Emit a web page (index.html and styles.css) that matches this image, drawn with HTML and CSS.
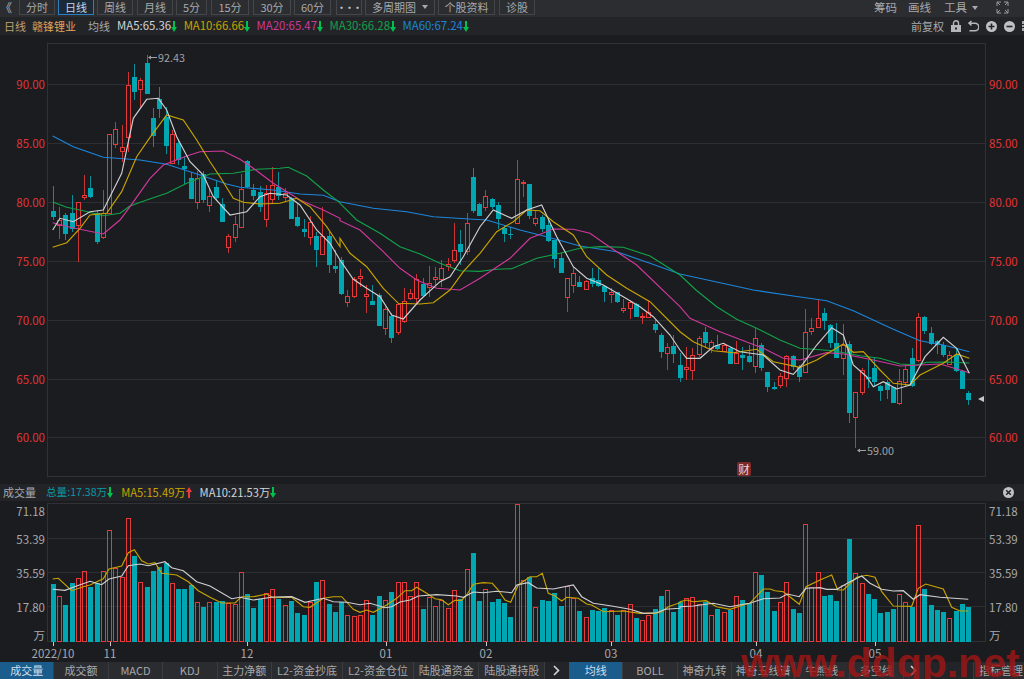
FILE: index.html
```html
<!DOCTYPE html>
<html lang="zh-CN">
<head>
    <meta charset="UTF-8">
    <meta name="viewport" content="width=device-width, initial-scale=1.0">
    <title>赣锋锂业 日线</title>
    <link rel="stylesheet" href="styles.css">
</head>
<body>
    <div class="toolbar">
        <span class="collapse">《</span>
        <span class="btn">分时</span>
        <span class="btn btn-active">日线</span>
        <span class="btn btn-gap">周线</span>
        <span class="btn">月线</span>
        <span class="btn btn-small">5分</span>
        <span class="btn btn-num">15分</span>
        <span class="btn btn-num btn-tight">30分</span>
        <span class="btn btn-num btn-sixty">60分</span>
        <span class="btn btn-dots">•••</span>
        <span class="btn btn-multi">多周期图 <i class="caret"></i></span>
        <span class="btn btn-info">个股资料</span>
        <span class="btn">诊股</span>
        <span class="spacer"></span>
        <span class="tool">筹码</span>
        <span class="tool tool-draw">画线</span>
        <span class="tool tool-last">工具 <i class="caret"></i></span>
        <svg class="expand-icon" width="13" height="13" viewBox="0 0 13 13">
            <path d="M1 5V1h4M1 1l3 3M8 1h4v4M12 1L9 4M1 8v4h4M1 12l3-3M8 12h4V8M12 12L9 9" fill="none" stroke="#9a9b9e"/>
        </svg>
    </div>

    <div class="info-row">
        <span class="period">日线</span>
        <span class="stock">赣锋锂业</span>
        <span class="ma-label">均线</span>
        <span class="ma ma5">MA5:65.36<svg class="arrow" width="6" height="11" viewBox="0 0 6 11"><path d="M2 0h2v6h2l-3 5-3-5h2z" fill="#00c050"/></svg></span>
        <span class="ma ma10">MA10:66.66<svg class="arrow" width="6" height="11" viewBox="0 0 6 11"><path d="M2 0h2v6h2l-3 5-3-5h2z" fill="#00c050"/></svg></span>
        <span class="ma ma20">MA20:65.47<svg class="arrow" width="6" height="11" viewBox="0 0 6 11"><path d="M2 0h2v6h2l-3 5-3-5h2z" fill="#00c050"/></svg></span>
        <span class="ma ma30">MA30:66.28<svg class="arrow" width="6" height="11" viewBox="0 0 6 11"><path d="M2 0h2v6h2l-3 5-3-5h2z" fill="#00c050"/></svg></span>
        <span class="ma ma60">MA60:67.24<svg class="arrow" width="6" height="11" viewBox="0 0 6 11"><path d="M2 0h2v6h2l-3 5-3-5h2z" fill="#00c050"/></svg></span>
        <span class="spacer"></span>
        <span class="adjust">前复权</span>
        <svg class="row-icon" width="10" height="12" viewBox="0 0 10 12">
            <path d="M2.5 5V3.2a2.5 2.5 0 0 1 5 0V5" fill="none" stroke="#b5b6b8" stroke-width="1.4"/>
            <path d="M0 5h10v7H0z" fill="#b5b6b8"/>
            <path d="M4 7.5h2v2H4z" fill="#222428"/>
        </svg>
        <svg class="row-icon" width="11" height="12" viewBox="0 0 11 12">
            <path d="M3.5 1L1 3.2l2.5 2.2M1.5 3.2H7a3.4 3.4 0 0 1 0 7.6H1.5" fill="none" stroke="#b5b6b8" stroke-width="1.5"/>
        </svg>
        <svg class="row-icon" width="11" height="11" viewBox="0 0 11 11">
            <circle cx="5.5" cy="5.5" r="5.5" fill="#c0c1c3"/>
            <path d="M2.5 4.7h6v1.6h-6zM4.7 2.5h1.6v6H4.7z" fill="#222428"/>
        </svg>
        <svg class="row-icon" width="11" height="11" viewBox="0 0 11 11">
            <circle cx="5.5" cy="5.5" r="5.5" fill="#c0c1c3"/>
            <path d="M2.5 4.7h6v1.6h-6z" fill="#222428"/>
        </svg>
        <svg class="edge-icon" width="2" height="10" viewBox="0 0 2 10">
            <path d="M0 0h2v3H0zM0 4h2v2H0zM0 7h2v3H0z" fill="#a8a9ab"/>
        </svg>
    </div>

    <svg id="price-chart" class="chart" width="1024" height="449" viewBox="0 35 1024 449"></svg>

    <div class="vol-header">
        <span class="vol-name">成交量</span>
        <span class="vol-total">总量:17.38万<svg class="arrow" width="6" height="11" viewBox="0 0 6 11"><path d="M2 0h2v6h2l-3 5-3-5h2z" fill="#00c050"/></svg></span>
        <span class="vol-ma5">MA5:15.49万<svg class="arrow" width="6" height="11" viewBox="0 0 6 11"><path d="M3 0l3 5H4v6H2V5H0z" fill="#f03a3a"/></svg></span>
        <span class="vol-ma10">MA10:21.53万<svg class="arrow" width="6" height="11" viewBox="0 0 6 11"><path d="M2 0h2v6h2l-3 5-3-5h2z" fill="#00c050"/></svg></span>
        <span class="spacer"></span>
        <svg class="close-icon" width="11" height="11" viewBox="0 0 11 11">
            <circle cx="5.5" cy="5.5" r="5.5" fill="#c0c1c3"/>
            <path d="M3.2 3.2l4.6 4.6M7.8 3.2L3.2 7.8" stroke="#222428" stroke-width="1.5"/>
        </svg>
    </div>

    <svg id="vol-chart" class="chart" width="1024" height="161" viewBox="0 501 1024 161"></svg>

    <div class="tabs">
        <span class="tab tab-active">成交量</span>
        <span class="tab">成交额</span>
        <span class="tab">MACD</span>
        <span class="tab">KDJ</span>
        <span class="tab">主力净额</span>
        <span class="tab tab-wide">L2-资金抄底</span>
        <span class="tab tab-wide">L2-资金仓位</span>
        <span class="tab tab-mid">陆股通资金</span>
        <span class="tab tab-mid">陆股通持股</span>
        <span class="tab-more">
            <svg width="7" height="11" viewBox="0 0 7 11"><path d="M1 1l4.5 4.5L1 10" fill="none" stroke="#d4d5d8" stroke-width="1.6"/></svg>
        </span>
        <span class="tab tab-active">均线</span>
        <span class="tab">BOLL</span>
        <span class="tab">神奇九转</span>
        <span class="tab tab-five">神奇五线谱</span>
        <span class="tab">牛熊线</span>
        <span class="tab">多空线</span>
        <span class="tab-more tab-more-right">
            <svg width="7" height="11" viewBox="0 0 7 11"><path d="M1 1l4.5 4.5L1 10" fill="none" stroke="#d4d5d8" stroke-width="1.6"/></svg>
        </span>
        <span class="tab tab-manage">指标管理</span>
    </div>

    <div class="watermark">www.ddgp.net</div>

    <script src="chart.js"></script>
</body>
</html>
```

FILE: styles.css
```css
* {
    box-sizing: border-box;
}

html, body {
    margin: 0;
    height: 679px;
    overflow: hidden;
}

body {
    position: relative;
    background-color: #1b1c20;
    color: #a8a9ab;
    font-family: "Noto Sans CJK SC", "Liberation Sans", sans-serif;
    font-size: 11px;
    line-height: 1;
}

.spacer {
    flex: 1;
}

.toolbar {
    display: flex;
    align-items: flex-start;
    height: 17px;
    background-color: #2b2d31;
}

.collapse {
    width: 19px;
    padding-top: 2px;
    font-size: 12px;
    color: #b5b6b8;
}

.btn {
    display: flex;
    align-items: center;
    justify-content: center;
    gap: 6px;
    width: 36px;
    height: 15px;
    margin-right: 3px;
    border: 1px solid #44464a;
    border-top: 0;
    color: #a8a9ab;
}

.btn-active {
    border: 1px solid #2a7fc0;
    border-top: 0;
    background-color: #1c2a38;
    color: #c4d4e4;
}

.btn-gap {
    margin-right: 4px;
}

.btn-small {
    width: 31px;
    margin-right: 4px;
}

.btn-num {
    width: 38px;
    margin-right: 4px;
}

.btn-tight {
    margin-right: 3px;
}

.btn-sixty {
    width: 37px;
    margin-right: 5px;
}

.btn-dots {
    width: 26px;
    font-size: 9px;
    font-weight: bold;
    letter-spacing: -1px;
    color: #c4c5c7;
}

.btn-multi {
    width: 70px;
}

.btn-info {
    width: 57px;
    margin-right: 4px;
}

.caret {
    display: inline-block;
    width: 0;
    height: 0;
    border: 3px solid transparent;
    border-top: 4px solid #a8a9ab;
    border-bottom: 0;
}

.tool {
    display: flex;
    align-items: center;
    gap: 5px;
    height: 15px;
    margin-right: 11px;
    font-size: 11.5px;
    color: #a8a9ab;
}

.tool-draw {
    margin-right: 13px;
}

.tool-last {
    margin-right: 18px;
}

.expand-icon {
    margin: 1px 15px 0 0;
}

.info-row {
    display: flex;
    align-items: center;
    height: 18px;
    padding-left: 4px;
    background-color: #222428;
}

.period {
    width: 28px;
    color: #c4a070;
}

.stock {
    width: 56px;
    color: #e0a55c;
}

.ma-label {
    width: 29px;
    color: #a8a9ab;
}

.ma {
    display: flex;
    align-items: center;
    margin-right: 6.5px;
    font-size: 11.4px;
}

.ma5 { color: #d4d5d8; }
.ma10 { color: #c9a400; }
.ma20 { color: #d0389c; }
.ma30 { color: #12a24a; }
.ma60 { color: #1c86dc; }

.adjust {
    margin-right: 7px;
    color: #a8a9ab;
}

.row-icon {
    margin-right: 7px;
}

.chart {
    display: block;
}

.chart text {
    font-family: "Noto Sans CJK SC", "Liberation Sans", sans-serif;
    font-size: 11.5px;
}

.chart text.mark {
    font-size: 10.8px;
}

.vol-header {
    display: flex;
    align-items: center;
    height: 17px;
    padding-left: 3px;
    background-color: #222428;
}

.vol-name {
    width: 43px;
    color: #a8a9ab;
}

.vol-total,
.vol-ma5,
.vol-ma10 {
    display: flex;
    align-items: center;
    margin-right: 8px;
    font-size: 11.2px;
}

.vol-total {
    font-size: 10.6px;
    color: #0a9aa6;
}

.vol-ma5 { color: #c9a400; }
.vol-ma10 { color: #d4d5d8; }

.close-icon {
    margin-right: 10px;
}

.tabs {
    display: flex;
    height: 17px;
    background-color: #222428;
}

.tab {
    display: flex;
    align-items: center;
    justify-content: center;
    width: 54.4px;
    border-right: 1px solid #3a3c40;
    background-color: #2a2c30;
    color: #a8a9ab;
    white-space: nowrap;
}

.tab-active {
    background-color: #1a5c8c;
    color: #cfdfec;
}

.tab-wide {
    width: 71px;
}

.tab-mid {
    width: 65.5px;
}

.tab-five {
    width: 63px;
}

.tab-more {
    display: flex;
    align-items: center;
    justify-content: center;
    width: 24px;
}

.tab-more-right {
    width: 20px;
    background-color: #2a2c30;
}

.tab-manage {
    margin-left: auto;
    width: 51px;
    padding-left: 4px;
    border-left: 1px solid #3a3c40;
    border-right: 0;
}

/* site stamp lies over the tabs */
.watermark {
    position: absolute;
    left: 741px;
    top: 640px;
    font-family: "Liberation Sans", sans-serif;
    font-size: 41px;
    font-weight: bold;
    line-height: 46px;
    white-space: nowrap;
    color: #a01616;
    opacity: 0.8;
}
```

FILE: chart.js
```js
// candle values: hi, top of body, bottom of body, lo (pixels, read at 3x from each base)
const candleSections = [
    { base: 50, rows: "c407,483,500,510 r470,510,525,568 c490,496,552,570 c434,490,538,545 r455,457,525,635 r375,434,440,450 c378,415,440,445 c480,490,575,582 r420,490,562,568 r252,252,490,490 r217,238,283,295 r225,290,302,335 r65,105,262,305 c43,80,126,150 r85,90,118,170 c15,38,132,132 c175,203,258,290 c110,147,176,205 c170,200,287,312 r240,252,340,343 c270,278,330,345 c320,348,358,405 c365,383,447,447 r362,385,457,478 c362,372,450,458 r415,438,465,485 c390,410,443,450 c445,463,517,517 r553,558,592,610 r497,523,560,575 r372,418,532,532 c330,332,412,415 c403,420,437,450 c408,427,470,485 r405,430,508,530 r350,405,447,462 c367,410,437,450 r415,430,440,455 c440,445,508,508 c462,500,527,530 c508,537,547,560 r497,517,562,585 c545,558,600,650 r470,558,613,613 c545,558,645,670 c600,648,658,668" },
    { base: 150, rows: "c320,330,432,435 r420,437,456,470 r380,388,437,445 r358,379,383,410 r405,433,437,490 c405,452,464,465 c430,435,527,527 r470,476,533,555 c490,497,565,578 r460,462,545,555 r415,452,512,520 r418,428,443,450 r373,388,443,460 c385,402,437,440 r347,398,412,440 r350,382,388,405 r330,355,386,410 r325,341,348,362 r220,301,331,340 c240,282,305,345 r190,218,302,316 c53,81,183,190 c160,163,198,198 r120,137,172,183 c143,148,172,178 c157,165,208,238 c225,235,253,275 c232,253,255,267 r30,88,220,223 r90,97,100,142 c102,102,197,207 r180,205,220,228 c195,202,237,245 c205,225,274,276 c270,270,327,355 c310,325,368,370 r385,385,442,487 r350,368,405,428 c377,395,412,412 r390,393,416,418 c355,385,403,412 c355,390,408,410 c405,407,425,455 r415,427,433,458 c425,427,457,458 r447,474,480,488 r450,455,475,508 c458,462,500,502 r490,497,501,522 r450,485,500,505 c510,522,540,550 c548,555,605,625 r580,592,610,660 c555,588,612,640" },
    { base: 290, rows: "c190,225,265,275 r170,232,238,270 r175,195,240,270 r138,145,193,200 c110,127,158,175 r150,157,175,190 c135,165,178,180 r160,165,183,185 c170,175,222,222 r153,190,218,220 c170,195,205,240 c165,197,215,218 r115,145,228,250 c160,165,235,242 c245,247,292,305 c277,290,296,300 r250,257,284,295 r195,198,264,290 c195,198,232,240 c225,230,260,275 r58,125,247,248 r85,114,124,135 r30,83,112,115 c55,70,93,120 c103,105,158,175 c100,160,203,205 r103,165,203,255 c152,163,368,400 r305,305,382,475 r235,240,305,315 c210,262,266,295 c200,233,277,290 c285,288,303,332 c270,277,300,328 c290,290,340,340 r237,272,340,345 r225,237,275,290 c175,205,288,290 r70,82,210,215 c78,80,122,133 c112,128,162,165 c150,152,165,192 c155,165,195,200 r183,195,222,225 c175,195,243,245 c240,243,297,298 c303,310,330,346" }
];

// bar tops, same reading
const volumeSections = [
    { base: 500, tops: [253,289,315,248,235,214,261,250,214,90,205,230,55,168,246,262,213,200,188,250,268,268,256,305,320,307,307,304,308,313,216,283,323,297,278,267,298,316,302,340,345,306,247,240,312,336,306,345,348,345] },
    { base: 500, tops: [301,345,288,299,275,245,245,288,245,328,292,319,300,325,270,298,208,160,304,268,307,297,310,350,12,240,232,321,299,304,278,318,257,295,334,351,331,334,324,329,345,330,313,353,361,346,328,289,270,337,307] },
    { base: 490, tops: [325,322,342,335,375,356,367,360,319,331,340,246,256,305,363,337,275,358,369,103,290,246,318,315,333,286,148,248,280,312,326,369,366,358,313,335,350,106,297,345,360,366,385,362,342,350] }
];

// moving averages, point lists read off the chart in three stretches
const priceLines = [
    { color: "#1c86dc", parts: [
        [40, 50, [38,258, 100,290, 190,322, 300,330, 380,343, 480,375, 560,402, 600,412, 700,420, 780,432, 850,436, 900,455]],
        [340, 150, [0,155, 100,175, 200,185, 280,200, 400,208, 440,210, 540,240, 620,260, 720,288, 830,305, 930,340, 1020,372]],
        [660, 290, [280,0, 400,18, 500,32, 580,62, 700,118, 780,152, 850,165, 928,185]]
    ] },
    { color: "#12a24a", parts: [
        [40, 50, [38,456, 80,472, 130,482, 190,497, 240,490, 270,468, 320,450, 380,430, 440,400, 510,372, 580,370, 650,358, 720,355, 745,352, 800,378, 850,420, 900,458]],
        [340, 150, [0,160, 50,210, 120,250, 180,290, 240,312, 300,340, 360,362, 420,364, 470,358, 515,356, 590,325, 660,310, 720,295, 780,290, 850,292, 930,318, 1020,375]],
        [660, 290, [108,0, 170,50, 230,88, 290,115, 360,150, 420,175, 520,182, 600,197, 660,205, 720,222, 770,225, 800,217, 860,216, 928,219]]
    ] },
    { color: "#d0389c", parts: [
        [40, 50, [38,518, 90,532, 190,552, 240,510, 270,470, 330,385, 370,345, 440,318, 480,305, 550,303, 600,328, 640,355, 700,400, 780,450, 850,480, 900,505]],
        [340, 150, [0,212, 60,240, 130,305, 180,355, 230,390, 290,415, 360,420, 420,385, 510,325, 570,265, 640,237, 700,238, 750,250, 800,285, 890,345, 1020,470]],
        [660, 290, [90,85, 180,125, 270,160, 310,175, 370,205, 420,210, 500,188, 550,192, 640,210, 720,228, 780,225, 840,222, 928,248]]
    ] },
    { color: "#c9a400", parts: [
        [40, 50, [38,592, 80,578, 120,535, 150,495, 200,490, 245,425, 290,320, 330,262, 380,195, 430,210, 470,270, 510,335, 540,380, 580,445, 610,457, 660,462, 720,460, 770,445, 810,470, 860,530, 900,590]],
        [340, 150, [0,265, 30,310, 80,350, 130,415, 175,460, 240,462, 280,458, 330,420, 370,365, 420,310, 470,245, 520,215, 560,180, 600,182, 640,215, 700,255, 740,320, 800,375, 860,415, 930,455, 1020,545]],
        [660, 290, [100,155, 160,182, 220,188, 290,178, 340,215, 420,232, 470,210, 550,162, 580,187, 610,185, 660,240, 700,280, 750,285, 780,255, 850,220, 890,192, 928,205]]
    ] },
    { color: "#d0d0d2", parts: [
        [40, 50, [38,540, 60,505, 100,515, 150,485, 190,480, 245,370, 280,205, 320,148, 355,145, 380,180, 410,260, 450,335, 490,375, 520,440, 570,495, 620,485, 660,440, 690,430, 740,435, 780,465, 830,540, 870,580, 900,630]],
        [340, 150, [0,330, 40,388, 80,415, 120,440, 155,495, 190,507, 240,450, 300,395, 330,380, 370,320, 420,230, 460,180, 515,205, 560,180, 605,165, 650,260, 700,350, 740,385, 790,405, 850,440, 900,470, 940,500, 990,555, 1020,600]],
        [660, 290, [80,205, 120,205, 160,170, 190,160, 240,185, 310,195, 360,240, 400,253, 430,220, 470,165, 515,113, 550,135, 580,225, 620,260, 640,290, 670,275, 710,297, 750,285, 795,200, 850,142, 890,175, 928,250]]
    ] }
];

const volumeLines = [
    { color: "#c9a400", parts: [
        [40, 500, [38,237, 55,235, 95,272, 130,260, 150,255, 190,236, 207,207, 245,198, 265,158, 283,149, 305,182, 325,192, 345,188, 365,220, 410,225, 445,245, 475,272, 510,292, 545,309, 585,309, 605,290, 640,290, 680,282, 700,293, 755,292, 790,320, 810,322, 850,295, 880,290, 905,290, 940,328, 960,337]],
        [360, 500, [20,330, 40,337, 80,315, 110,295, 135,272, 155,272, 170,262, 200,280, 225,296, 245,299, 265,314, 285,301, 305,301, 320,285, 340,253, 370,248, 397,250, 415,270, 435,300, 452,307, 475,255, 510,230, 530,230, 547,220, 565,280, 585,288, 605,303, 620,292, 655,295, 680,312, 695,315, 730,335, 790,333, 840,340, 885,340, 905,335, 925,320, 960,308]],
        [680, 490, [0,335, 20,330, 40,335, 78,332, 110,350, 150,358, 190,345, 209,340, 250,297, 270,297, 285,302, 310,305, 335,325, 358,343, 378,290, 420,270, 455,255, 473,300, 490,300, 530,262, 560,256, 585,262, 605,305, 640,348, 695,349, 715,295, 737,282, 790,297, 815,352, 840,363, 865,363]]
    ] },
    { color: "#d0d0d2", parts: [
        [40, 500, [38,268, 75,271, 110,258, 150,244, 185,254, 207,237, 245,228, 265,197, 300,192, 325,197, 375,185, 395,203, 430,212, 470,245, 510,258, 575,296, 600,292, 640,300, 700,291, 755,290, 795,307, 850,295, 880,305, 920,307, 960,314]],
        [360, 500, [30,310, 75,323, 95,320, 120,306, 150,300, 175,288, 230,284, 290,288, 310,292, 340,276, 370,278, 410,274, 455,278, 470,255, 505,248, 530,264, 580,267, 640,255, 665,290, 700,310, 755,318, 810,328, 850,340, 890,338, 915,328, 960,325]],
        [680, 490, [0,350, 40,348, 100,340, 150,350, 190,343, 209,340, 250,326, 300,324, 322,312, 358,320, 378,295, 420,293, 440,298, 470,298, 510,275, 545,258, 570,280, 605,298, 640,303, 670,302, 700,328, 720,314, 780,322, 865,328]]
    ] }
];

const RED = "#e8393a";
const CYAN = "#00a7b3";
const GRID = "#2c2e32";
const FRAME = "#303236";

function barX(i) {
    return Math.round(52.7 + 6.27 * i) + 0.5;
}

function line(x1, y1, x2, y2, color) {
    return `<line x1="${x1}" y1="${y1}" x2="${x2}" y2="${y2}" stroke="${color}"/>`;
}

function label(x, y, text, color, anchor, cls) {
    return `<text class="${cls || ""}" x="${x}" y="${y}" fill="${color}" text-anchor="${anchor || "start"}" dominant-baseline="central">${text}</text>`;
}

function drawMaLine(item) {
    const pts = [];
    item.parts.forEach(([x0, y0, flat]) => {
        for (let i = 0; i < flat.length; i += 2) {
            pts.push((x0 + flat[i] / 3).toFixed(1) + "," + (y0 + flat[i + 1] / 3).toFixed(1));
        }
    });
    return `<polyline points="${pts.join(" ")}" fill="none" stroke="${item.color}" stroke-width="1.15"/>`;
}

// candles first, volumes need their colours
const candles = [];
candleSections.forEach(section => {
    section.rows.split(" ").forEach(row => {
        const nums = row.slice(1).split(",").map(Number).map(v => Math.round(section.base + v / 3));
        candles.push({ up: row[0] === "r", hi: nums[0], top: nums[1], bot: nums[2], lo: nums[3] });
    });
});

function drawPriceChart() {
    let html = "";
    [[90, 84], [85, 143], [80, 202], [75, 261], [70, 320], [65, 378.5], [60, 437]].forEach(([price, y]) => {
        const yy = Math.round(y) + 0.5;
        html += line(48, yy, 985, yy, GRID);
        html += label(45, y, price.toFixed(2), "#e03535", "end");
        html += label(989, y, price.toFixed(2), "#e03535");
    });
    html += `<rect x="47.5" y="43.5" width="938" height="433" fill="none" stroke="${FRAME}"/>`;

    candles.forEach((c, i) => {
        const x = barX(i);
        const h = Math.max(c.bot - c.top, 1);
        if (c.up) {
            html += line(x, c.hi, x, c.top, "#c93434");
            html += line(x, c.top + h, x, c.lo, "#c93434");
            html += `<rect x="${x - 2}" y="${c.top + 0.5}" width="4" height="${h}" fill="none" stroke="${RED}"/>`;
        } else {
            html += line(x, c.hi, x, c.lo, "#0d8d98");
            html += `<rect x="${x - 2.5}" y="${c.top}" width="5" height="${h}" fill="${CYAN}"/>`;
        }
    });

    priceLines.forEach(item => { html += drawMaLine(item); });

    // high and low marks
    html += line(149, 57.5, 157, 57.5, "#a0a1a3");
    html += `<path d="M148 57.5l3-2v4z" fill="#a0a1a3"/>`;
    html += label(158, 57, "92.43", "#a0a1a3", "start", "mark");
    html += line(858, 450.5, 866, 450.5, "#a0a1a3");
    html += `<path d="M857 450.5l3-2v4z" fill="#a0a1a3"/>`;
    html += label(867, 450, "59.00", "#a0a1a3", "start", "mark");

    // last price pointer
    html += `<path d="M978 399l6-3v6z" fill="#c8c9cb"/>`;

    // report badge
    html += `<rect x="737" y="462" width="14" height="14" rx="2" fill="#7c2a2a"/>`;
    html += label(744, 469, "财", "#ecd4d4", "middle");

    document.getElementById("price-chart").innerHTML = html;
}

function drawVolumeChart() {
    let html = "";
    [[538, "53.39", 539], [572, "35.59", 573], [606, "17.80", 607]].forEach(([y, text, ty]) => {
        html += line(48, y + 0.5, 985, y + 0.5, GRID);
        html += label(45, ty, text, "#a8a9ab", "end");
        html += label(989, ty, text, "#a8a9ab");
    });
    html += label(45, 511, "71.18", "#a8a9ab", "end");
    html += label(989, 511, "71.18", "#a8a9ab");
    html += label(45, 635, "万", "#a8a9ab", "end");
    html += label(989, 635, "万", "#a8a9ab");
    html += `<rect x="47.5" y="503.5" width="938" height="138" fill="none" stroke="${FRAME}"/>`;

    let i = 0;
    volumeSections.forEach(section => {
        section.tops.forEach(top => {
            const x = barX(i);
            const y = Math.round(section.base + top / 3);
            if (candles[i].up) {
                html += `<rect x="${x - 2}" y="${y + 0.5}" width="4" height="${641 - y}" fill="none" stroke="${RED}"/>`;
            } else {
                html += `<rect x="${x - 2.5}" y="${y}" width="5" height="${642 - y}" fill="${CYAN}"/>`;
            }
            i++;
        });
    });

    volumeLines.forEach(item => { html += drawMaLine(item); });

    [[53, "2022/10"], [110, "11"], [247, "12"], [386, "01"], [486, "02"], [611, "03"], [756, "04"], [875, "05"]].forEach(([x, text]) => {
        html += line(x + 0.5, 642, x + 0.5, 646, "#c8c9cb");
        html += label(x, 653, text, "#a8a9ab", "middle");
    });

    document.getElementById("vol-chart").innerHTML = html;
}

drawPriceChart();
drawVolumeChart();
```
